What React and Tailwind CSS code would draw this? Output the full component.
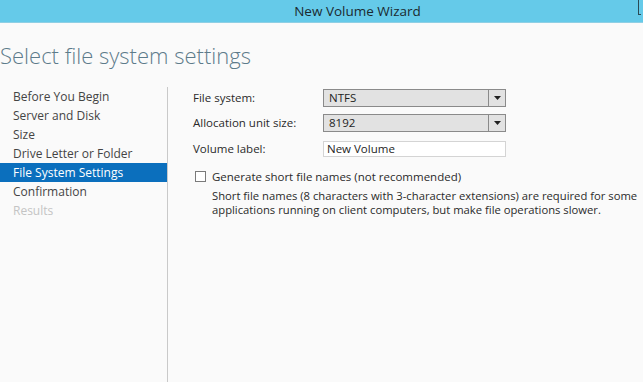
import React from 'react';

const steps = [
  { label: 'Before You Begin' },
  { label: 'Server and Disk' },
  { label: 'Size' },
  { label: 'Drive Letter or Folder' },
  { label: 'File System Settings', active: true },
  { label: 'Confirmation' },
  { label: 'Results', disabled: true },
];

const Dropdown = ({ value }) => (
  <div className="flex h-[18px] w-[183px] border border-[#8a8a8a] bg-[#e2e2e2]">
    <span className="flex-1 pl-[5px] leading-[16px] text-[#1e1e1e]">{value}</span>
    <span className="flex w-[17px] items-center justify-center border-l border-[#8a8a8a]">
      <svg width="7" height="4" viewBox="0 0 7 4">
        <path d="M0 0h7L3.5 4z" fill="#222" />
      </svg>
    </span>
  </div>
);

const App = () => {
  return (
    <div className="flex h-[382px] w-[643px] flex-col overflow-hidden bg-[#fafafa] text-[11.5px] font-['Open_Sans',sans-serif]">
      {/* Title bar */}
      <div className="relative flex h-[23px] shrink-0 items-center justify-center border-b border-[#8fcfe4] bg-[#65cae9] pl-[72px]">
        <span className="text-[13.5px] text-[#1b2a30]">New Volume Wizard</span>
        <span className="absolute right-[2px] top-0 h-[15px] w-[3px] border-l border-b border-[#2a4a55]" />
      </div>

      {/* Heading */}
      <div className="h-[64px] shrink-0 pt-[19px]">
        <h1 className="text-[22px] font-light leading-[26px] text-[#5d7b8a]">Select file system settings</h1>
      </div>

      <div className="flex flex-1">
        {/* Steps */}
        <div className="w-[168px] shrink-0 border-r border-[#c9c9c9] text-[12px]">
          {steps.map((s) => (
            <div
              key={s.label}
              className={
                s.active
                  ? 'h-[19px] bg-[#0b6fbd] pl-[13px] leading-[19px] text-white'
                  : s.disabled
                    ? 'h-[19px] pl-[13px] leading-[19px] text-[#c4c4c4]'
                    : 'h-[19px] pl-[13px] leading-[19px] text-[#444]'
              }
            >
              {s.label}
            </div>
          ))}
        </div>

        {/* Form */}
        <div className="flex-1 pl-[25px] pt-[2px] text-[#2a2a2a]">
          <div className="flex items-center">
            <span className="w-[130px]">File system:</span>
            <Dropdown value="NTFS" />
          </div>
          <div className="mt-[7px] flex items-center">
            <span className="w-[130px]">Allocation unit size:</span>
            <Dropdown value="8192" />
          </div>
          <div className="mt-[8px] flex items-center">
            <span className="w-[130px]">Volume label:</span>
            <div className="h-[16px] w-[183px] border border-[#d4d4d4] bg-white pl-[3px] leading-[14px] text-[#1e1e1e]">
              New Volume
            </div>
          </div>

          <div className="mt-[11px] flex items-center">
            <span className="ml-[2px] h-[11px] w-[11px] border border-[#7a7a7a] bg-white" />
            <span className="ml-[6px]">Generate short file names (not recommended)</span>
          </div>
          <p className="ml-[19px] mt-[3px] text-[11.25px] leading-[14px] text-[#2a2a2a]">
            Short file names (8 characters with 3-character extensions) are required for some
            <br />
            applications running on client computers, but make file operations slower.
          </p>
        </div>
      </div>
    </div>
  );
};

export default App;
